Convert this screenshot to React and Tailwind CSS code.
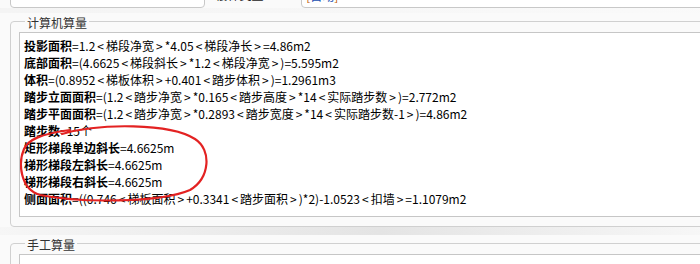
import React from "react";

const lines = [
  ["投影面积", "=1.2<梯段净宽>*4.05<梯段净长>=4.86m2"],
  ["底部面积", "=(4.6625<梯段斜长>*1.2<梯段净宽>)=5.595m2"],
  ["体积", "=(0.8952<梯板体积>+0.401<踏步体积>)=1.2961m3"],
  ["踏步立面面积", "=(1.2<踏步净宽>*0.165<踏步高度>*14<实际踏步数>)=2.772m2"],
  ["踏步平面面积", "=(1.2<踏步净宽>*0.2893<踏步宽度>*14<实际踏步数-1>)=4.86m2"],
  ["踏步数", "=15个"],
  ["矩形梯段单边斜长", "=4.6625m"],
  ["梯形梯段左斜长", "=4.6625m"],
  ["梯形梯段右斜长", "=4.6625m"],
  ["侧面面积", "=((0.746<梯板面积>+0.3341<踏步面积>)*2)-1.0523<扣墙>=1.1079m2"],
];

function Rest({ text }) {
  const parts = text.split(/([<>])/);
  return parts.map((p, i) =>
    p === "<" || p === ">" ? (
      <span key={i} className="mx-[2px]">{p}</span>
    ) : (
      <span key={i}>{p}</span>
    )
  );
}

export default function App() {
  return (
    <div
      className="w-[700px] h-[264px] overflow-hidden bg-[#fafafa] text-black relative"
      style={{ fontFamily: '"Noto Sans CJK SC", "Noto Sans", sans-serif' }}
    >
      <div className="w-[760px]">
        {/* top row (cropped) */}
        <div className="h-[8px] flex items-end overflow-hidden">
          <div className="ml-[10px] w-[196px] h-[30px] border border-[#c8c8c8] rounded-[4px] bg-white" />
          <div className="ml-[10px] w-[86px] h-[8px] overflow-hidden relative">
            <span className="absolute left-0 top-[-14px] text-[12px] leading-[17px] text-[#222]">楼梯类型：</span>
          </div>
          <div className="w-[460px] h-[30px] border border-[#c8c8c8] rounded-[4px] bg-white relative overflow-hidden">
            <span className="absolute left-[4px] top-[8px] text-[12px] leading-[17px] text-[#c06010]">[<span className="text-[#2050b0]">自动</span>]</span>
          </div>
        </div>

        <div className="h-[5px] bg-gradient-to-r from-[#f4f4f4] to-[#fafafa]" />

        {/* 计算机算量 */}
        <fieldset className="ml-[10px] border border-[#d0d0d0] rounded-[4px] pl-[8px] pb-[9px] pt-[2px]">
          <legend className="ml-[6px] px-[2px] text-[12px] leading-[17px] text-[#333] translate-y-[1px]">计算机算量</legend>
          <div className="relative border border-[#c6c6c6] bg-white h-[185px] pl-[4px] pt-[4px] text-[12px] leading-[17px]">
            {lines.map(([b, rest], i) => (
              <div key={i} className="whitespace-nowrap">
                <span className="font-bold">{b}</span>
                <Rest text={rest} />
              </div>
            ))}
            <svg
              className="absolute left-0 top-0 pointer-events-none"
              width="260"
              height="185"
              viewBox="0 0 260 185"
            >
              <path
                d="M 42 101 C 80 90, 150 90, 175 106 C 192 117, 190 145, 170 157 C 140 170, 60 170, 20 162 C 0 156, -2 130, 4 116 C 8 107, 20 101, 50 97"
                fill="none"
                stroke="#e32222"
                strokeWidth="2.2"
                strokeLinecap="round"
              />
            </svg>
          </div>
        </fieldset>

        <div className="h-[8px] bg-gradient-to-r from-[#f6f6f6] via-[#e4e4e4] to-[#fafafa]" />

        {/* 手工算量 */}
        <fieldset className="ml-[10px] border border-[#d0d0d0] rounded-[4px] pl-[8px] pb-[9px] pt-[2px]">
          <legend className="ml-[6px] px-[2px] text-[12px] leading-[17px] text-[#333] translate-y-[1px]">手工算量</legend>
          <div className="border border-[#c6c6c6] bg-white h-[100px]" />
        </fieldset>
      </div>
    </div>
  );
}
